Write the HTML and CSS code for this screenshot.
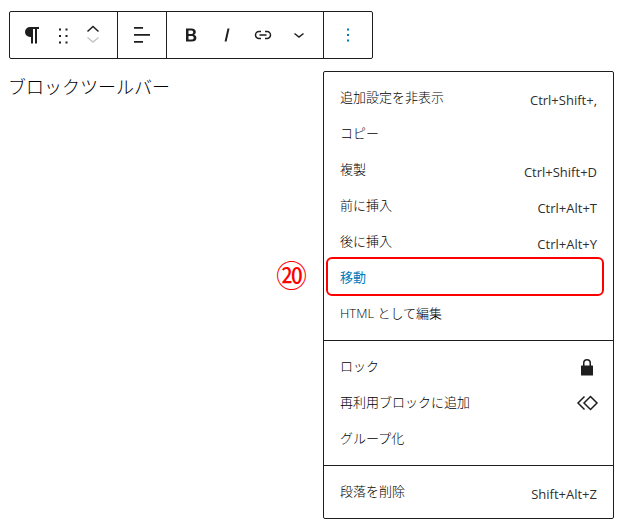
FILE: index.html
```html
<!DOCTYPE html>
<html lang="ja">
<head>
    <meta charset="UTF-8">
    <title>ブロックツールバー</title>
    <link rel="stylesheet" href="styles.css">
</head>
<body>
    <div class="toolbar">
        <div class="tool-group group-block">
            <button class="tool">
                <svg width="24" height="24" viewBox="0 0 24 24"><path d="M19 4H10a5 5 0 0 0 0 10h1v6.500h2V6h2v14.500h2V6h2z"/></svg>
            </button>
            <button class="tool tool-drag">
                <svg width="24" height="24" viewBox="0 0 24 24"><path d="M8 5.500h2v2H8zM14.500 5.500h2v2h-2zM8 12h2v2H8zM14.500 12h2v2h-2zM8 18.500h2v2H8zM14.500 18.500h2v2h-2z"/></svg>
            </button>
            <div class="movers">
                <svg width="24" height="16" viewBox="0 0 24 16"><path class="line" d="M6.500 11.500 12 6.500l5.500 5"/></svg>
                <svg width="24" height="16" viewBox="0 0 24 16"><path class="line off" d="M6.500 3.500 12 8l5.500-4.500"/></svg>
            </div>
        </div>
        <div class="tool-group group-align">
            <button class="tool">
                <svg width="24" height="24" viewBox="0 0 24 24"><path d="M4 4h9v1.800H4zM4 11h16v1.800H4zM4 18h9v1.800H4z"/></svg>
            </button>
        </div>
        <div class="tool-group group-format">
            <button class="tool">
                <svg width="24" height="24" viewBox="0 0 24 24"><path d="M7 5.500h5.500c2.700 0 4.300 1.300 4.300 3.400 0 1.400-.8 2.500-2 2.900 1.600.3 2.600 1.500 2.600 3.200 0 2.400-1.800 3.500-4.500 3.500H7zm2.500 2v3.500h2.700c1.300 0 2-.7 2-1.800s-.7-1.700-2-1.700zm0 5.400v3.600h3c1.400 0 2.200-.6 2.200-1.800s-.8-1.800-2.200-1.800z"/></svg>
            </button>
            <button class="tool">
                <svg width="24" height="24" viewBox="0 0 24 24"><path d="M12.500 5.500h2L11.600 18.500h-2z"/></svg>
            </button>
            <button class="tool">
                <svg width="24" height="24" viewBox="0 0 24 24"><path class="line" d="M10 8.500H8a3.500 3.500 0 0 0 0 7h2M14 8.500h2a3.500 3.500 0 0 1 0 7h-2M8.500 12h7"/></svg>
            </button>
            <button class="tool">
                <svg width="24" height="24" viewBox="0 0 24 24"><path class="line" d="M7.500 10.500 12 14l4.500-3.500"/></svg>
            </button>
        </div>
        <div class="tool-group group-more">
            <button class="tool">
                <svg width="24" height="24" viewBox="0 0 24 24"><path class="accent" d="M11 5.500h2v2h-2zM11 11h2v2h-2zM11 16.500h2v2h-2z"/></svg>
            </button>
        </div>
    </div>

    <div class="content">
        <p class="block-text">ブロックツールバー</p>

        <div class="menu">
            <div class="menu-group">
                <div class="menu-item"><span class="label">追加設定を非表示</span><span class="shortcut">Ctrl+Shift+,</span></div>
                <div class="menu-item"><span class="label">コピー</span></div>
                <div class="menu-item"><span class="label">複製</span><span class="shortcut">Ctrl+Shift+D</span></div>
                <div class="menu-item"><span class="label">前に挿入</span><span class="shortcut">Ctrl+Alt+T</span></div>
                <div class="menu-item"><span class="label">後に挿入</span><span class="shortcut">Ctrl+Alt+Y</span></div>
                <div class="menu-item active">
                    <span class="label">移動</span>
                    <span class="callout"></span>
                    <span class="callout-num">⑳</span>
                </div>
                <div class="menu-item"><span class="label">HTML として編集</span></div>
            </div>
            <div class="menu-group">
                <div class="menu-item">
                    <span class="label">ロック</span>
                    <svg width="24" height="24" viewBox="0 0 24 24"><path d="M17.500 10.500H16V8a4 4 0 0 0-8 0v2.500H6.500a.5.500 0 0 0-.5.500v9a.5.500 0 0 0 .5.500h11a.5.500 0 0 0 .5-.5v-9a.5.500 0 0 0-.5-.5zm-8 0V8a2.500 2.500 0 0 1 5 0v2.500z"/></svg>
                </div>
                <div class="menu-item">
                    <span class="label">再利用ブロックに追加</span>
                    <svg width="24" height="24" viewBox="0 0 24 24"><path class="line" d="M15.500 5.500 22 12l-6.500 6.500L9 12zM9.500 5.500 3 12l6.500 6.500"/></svg>
                </div>
                <div class="menu-item"><span class="label">グループ化</span></div>
            </div>
            <div class="menu-group">
                <div class="menu-item"><span class="label">段落を削除</span><span class="shortcut">Shift+Alt+Z</span></div>
            </div>
        </div>
    </div>
</body>
</html>
```

FILE: styles.css
```css
body {
    margin: 0;
    padding: 11px 11px 0 9px;
    background: #fff;
    color: #000;
    font-family: "Open Sans", "Noto Sans CJK JP", sans-serif;
    font-weight: 300;
}

svg {
    display: block;
    fill: #1e1e1e;
}
svg .line {
    fill: none;
    stroke: #1e1e1e;
    stroke-width: 1.5;
}
svg .off {
    stroke: #c4c4c4;
}
svg .accent {
    fill: #007cba;
}

.toolbar {
    display: flex;
    width: 364px;
    height: 48px;
    box-sizing: border-box;
    border: 1px solid #1e1e1e;
    border-radius: 2px;
}
.tool-group {
    display: flex;
    align-items: center;
    box-sizing: border-box;
    border-right: 1px solid #1e1e1e;
}
.group-block { width: 108px; padding-left: 10px; }
.group-align { width: 49px; padding-left: 12px; }
.group-format { width: 157px; padding-left: 12px; }
.group-more { flex: 1; padding-left: 12px; border-right: none; }

.tool {
    padding: 0;
    border: none;
    background: none;
}
.group-block .tool { margin-right: 7px; }
.group-format .tool { margin-right: 12px; }
.movers {
    margin-left: -1px;
}
.movers svg + svg {
    margin-top: -2px;
}

.content {
    display: flex;
    justify-content: space-between;
    align-items: flex-start;
    margin-top: 12px;
}
.block-text {
    margin: 4px 0 0 -1px;
    font-size: 18px;
    line-height: 24px;
}

.menu {
    width: 291px;
    box-sizing: border-box;
    border: 1px solid #1e1e1e;
    border-radius: 2px;
    background: #fff;
}
.menu-group {
    padding: 8px;
    border-top: 1px solid #1e1e1e;
}
.menu-group:first-child {
    border-top: none;
}
.menu-item {
    position: relative;
    display: flex;
    justify-content: space-between;
    align-items: center;
    height: 36px;
    padding: 0 8px;
    font-size: 13px;
}
.menu-item svg {
    margin-right: -2px;
}
.label {
    margin-bottom: 4px;
}
.shortcut {
    position: relative;
    top: 2px;
    font-size: 13px;
    font-weight: 400;
    color: #2f2f2f;
}
.active {
    color: #007cba;
    font-weight: 400;
}
.callout {
    position: absolute;
    left: -6px;
    right: 1px;
    top: -3px;
    bottom: 0;
    border: 2px solid #f00;
    border-radius: 6px;
}
.callout-num {
    position: absolute;
    left: -56px;
    top: -3px;
    font-size: 31px;
    font-weight: 400;
    line-height: 36px;
    color: #f00;
}
```
